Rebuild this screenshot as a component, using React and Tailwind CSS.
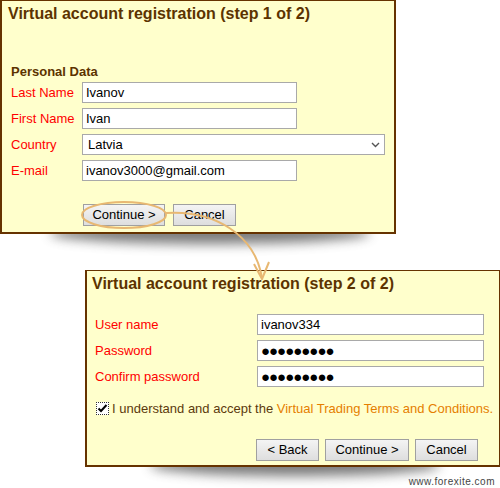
export default function App() {
  const font = { fontFamily: '"Liberation Sans", Arial, sans-serif' };
  const input =
    'h-[21px] border border-[#a9a9a9] bg-white px-[3px] text-[13px] text-black leading-[19px] flex items-center';
  const btn =
    'h-[22px] border border-[#a0a0a0] bg-gradient-to-b from-[#f4f4f4] to-[#dedede] text-[13px] text-black flex items-center justify-center';

  return (
    <div className="relative w-[500px] h-[488px] bg-white overflow-hidden" style={font}>
      {/* step 1 shadow */}
      <div className="absolute left-[50px] top-[222px] w-[320px] h-[22px] rounded-[50%] bg-[#444] blur-[6px] opacity-70"></div>
      {/* step 2 shadow */}
      <div className="absolute left-[150px] top-[454px] w-[290px] h-[22px] rounded-[50%] bg-[#444] blur-[6px] opacity-70"></div>

      <div className="relative flex flex-col">
        {/* Step 1 */}
        <div className="w-[396px] h-[234px] bg-[#ffffcc] border-2 border-t border-[#663300] flex flex-col">
          <div className="pl-[6px] pt-[3px] text-[16px] font-bold text-[#5c3300] leading-[20px]">
            Virtual account registration (step 1 of 2)
          </div>
          <div className="pl-[9px] pt-[40px] text-[13px] font-bold text-[#5c3300] leading-[16px]">Personal Data</div>
          <div className="flex flex-col gap-[5px] pl-[9px] pt-[2px]">
            <div className="flex items-center">
              <span className="w-[71px] text-[13px] text-[#ff0000]">Last Name</span>
              <div className={`${input} w-[215px]`}>Ivanov</div>
            </div>
            <div className="flex items-center">
              <span className="w-[71px] text-[13px] text-[#ff0000]">First Name</span>
              <div className={`${input} w-[215px]`}>Ivan</div>
            </div>
            <div className="flex items-center">
              <span className="w-[71px] text-[13px] text-[#ff0000]">Country</span>
              <div className={`${input} w-[303px] justify-between pl-[5px]`}>
                <span>Latvia</span>
                <svg width="9" height="6" viewBox="0 0 9 6" className="mr-[1px]">
                  <path d="M1 1l3.5 3.5L8 1" fill="none" stroke="#555" strokeWidth="1.4" />
                </svg>
              </div>
            </div>
            <div className="flex items-center">
              <span className="w-[71px] text-[13px] text-[#ff0000]">E-mail</span>
              <div className={`${input} w-[215px]`}>ivanov3000@gmail.com</div>
            </div>
          </div>
          <div className="flex gap-[8px] pl-[81px] pt-[23px]">
            <div className={`${btn} w-[82px]`}>Continue &gt;</div>
            <div className={`${btn} w-[63px]`}>Cancel</div>
          </div>
        </div>

        {/* Step 2 */}
        <div className="ml-[85px] mt-[36px] w-[415px] h-[197px] bg-[#ffffcc] border-2 border-t border-r border-[#663300] flex flex-col">
          <div className="pl-[5px] pt-[3px] text-[16px] font-bold text-[#5c3300] leading-[20px]">
            Virtual account registration (step 2 of 2)
          </div>
          <div className="flex flex-col gap-[5px] pl-[8px] pt-[20px]">
            <div className="flex items-center">
              <span className="w-[162px] text-[13px] text-[#ff0000]">User name</span>
              <div className={`${input} w-[227px]`}>ivanov334</div>
            </div>
            <div className="flex items-center">
              <span className="w-[162px] text-[13px] text-[#ff0000]">Password</span>
              <div className={`${input} w-[227px] text-[15px] tracking-[-1px]`}>●●●●●●●●●</div>
            </div>
            <div className="flex items-center">
              <span className="w-[162px] text-[13px] text-[#ff0000]">Confirm password</span>
              <div className={`${input} w-[227px] text-[15px] tracking-[-1px]`}>●●●●●●●●●</div>
            </div>
          </div>
          <div className="flex items-center gap-[3px] pl-[9px] pt-[12px] text-[13px]">
            <div className="w-[13px] h-[13px] border border-dotted border-[#333] bg-white flex items-center justify-center">
              <svg width="11" height="11" viewBox="0 0 11 11">
                <path d="M1.5 5.5l2.5 2.5 5.5-6" fill="none" stroke="#000" strokeWidth="2" />
              </svg>
            </div>
            <span className="text-[#5c3a0c]">
              I understand and accept the <span className="text-[#e57e00]">Virtual Trading Terms and Conditions.</span>
            </span>
          </div>
          <div className="flex justify-end gap-[6px] pr-[21px] pt-[20px]">
            <div className={`${btn} w-[63px]`}>&lt; Back</div>
            <div className={`${btn} w-[84px]`}>Continue &gt;</div>
            <div className={`${btn} w-[63px]`}>Cancel</div>
          </div>
        </div>

        <div className="self-end pr-[5px] pt-[9px] text-[10px] text-[#444] tracking-[0.5px] leading-[12px]">
          www.forexite.com
        </div>
      </div>

      {/* annotation: ellipse and arrow */}
      <svg className="absolute left-0 top-0 pointer-events-none" width="500" height="488" viewBox="0 0 500 488">
        <ellipse cx="124" cy="215" rx="42" ry="13" fill="none" stroke="#e8b872" strokeWidth="2" />
        <path d="M166 213 C 215 210, 255 235, 262 278" fill="none" stroke="#e8b872" strokeWidth="2" />
        <path d="M254 264 L262 279 L269 262" fill="none" stroke="#e8b872" strokeWidth="2" strokeLinejoin="round" />
      </svg>
    </div>
  );
}
